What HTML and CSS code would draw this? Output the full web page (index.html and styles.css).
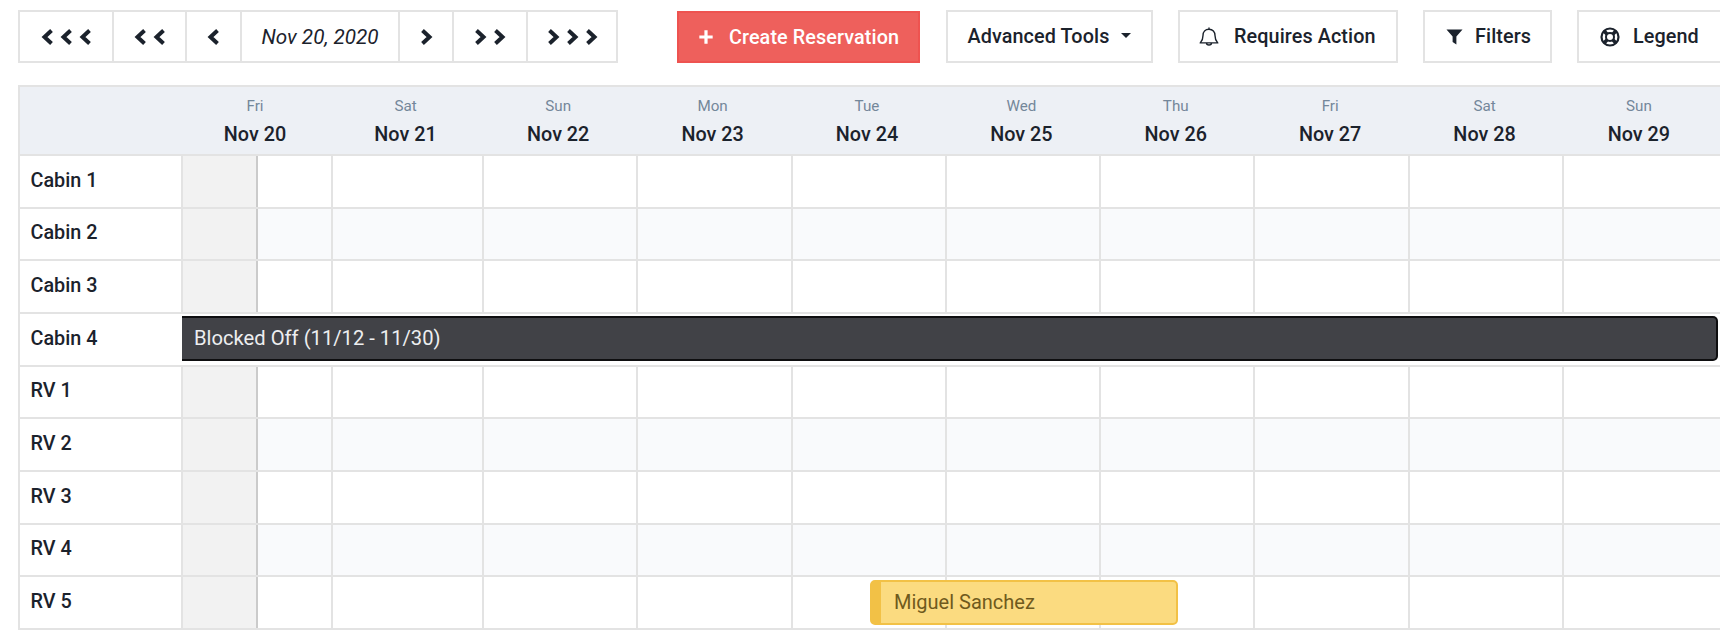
FILE: index.html
```html
<!DOCTYPE html>
<html lang="en">
<head>
<meta charset="utf-8">
<title>Reservations</title>
<link rel="stylesheet" href="styles.css">
</head>
<body>
<svg class="defs" width="0" height="0" aria-hidden="true">
  <symbol id="cl" viewBox="0 0 13 16"><polyline points="10.5,1.500 3.500,8 10.500,14.500" fill="none" stroke="currentColor" stroke-width="4"/></symbol>
  <symbol id="cr" viewBox="0 0 13 16"><polyline points="2.500,1.500 9.500,8 2.500,14.500" fill="none" stroke="currentColor" stroke-width="4"/></symbol>
</svg>
<div class="page">
  <div class="toolbar">
    <div class="pager">
      <div class="pg"><svg class="chev"><use href="#cl"/></svg><svg class="chev"><use href="#cl"/></svg><svg class="chev"><use href="#cl"/></svg></div>
      <div class="pg"><svg class="chev"><use href="#cl"/></svg><svg class="chev"><use href="#cl"/></svg></div>
      <div class="pg"><svg class="chev"><use href="#cl"/></svg></div>
      <div class="pg date">Nov 20, 2020</div>
      <div class="pg"><svg class="chev"><use href="#cr"/></svg></div>
      <div class="pg"><svg class="chev"><use href="#cr"/></svg><svg class="chev"><use href="#cr"/></svg></div>
      <div class="pg"><svg class="chev"><use href="#cr"/></svg><svg class="chev"><use href="#cr"/></svg><svg class="chev"><use href="#cr"/></svg></div>
    </div>
    <div class="btn create">
      <svg class="ico" viewBox="0 0 18 18"><path d="M9 1.500v15M1.500 9h15" stroke="currentColor" stroke-width="3.600" fill="none"/></svg>
      <span>Create Reservation</span>
    </div>
    <div class="btn tools"><span>Advanced Tools</span><i class="caret"></i></div>
    <div class="btn action">
      <svg class="ico" viewBox="0 0 20 22"><path d="M10 1.500v1.700M10 3.200c-3.700 0-6 2.700-6 6.200 0 4.600-1.300 5.800-2.800 7.500h17.600C17.300 15.200 16 14 16 9.400c0-3.500-2.300-6.200-6-6.200zM7.500 17c0 2.600 5 2.600 5 0" fill="none" stroke="currentColor" stroke-width="1.400" stroke-linejoin="round"/></svg>
      <span>Requires Action</span>
    </div>
    <div class="btn filters">
      <svg class="ico" viewBox="0 0 18 18"><path d="M.5 1.500h17L11 9v8.500L7 14.800V9z" fill="currentColor"/></svg>
      <span>Filters</span>
    </div>
    <div class="btn legend">
      <svg class="ico" viewBox="0 0 20 20"><circle cx="10" cy="10" r="8.500" fill="none" stroke="currentColor" stroke-width="2.200"/><circle cx="10" cy="10" r="4" fill="none" stroke="currentColor" stroke-width="2"/><path d="M3.800 3.800l3.400 3.400M16.200 3.800l-3.400 3.400M3.800 16.200l3.400-3.400M16.200 16.200l-3.400-3.400" stroke="currentColor" stroke-width="3.600"/></svg>
      <span>Legend</span>
    </div>
  </div>

  <div class="sheet">
    <div class="head">
      <div class="hd-corner"></div>
      <div class="hd"><span class="dow">Fri</span><span class="day">Nov 20</span></div>
      <div class="hd"><span class="dow">Sat</span><span class="day">Nov 21</span></div>
      <div class="hd"><span class="dow">Sun</span><span class="day">Nov 22</span></div>
      <div class="hd"><span class="dow">Mon</span><span class="day">Nov 23</span></div>
      <div class="hd"><span class="dow">Tue</span><span class="day">Nov 24</span></div>
      <div class="hd"><span class="dow">Wed</span><span class="day">Nov 25</span></div>
      <div class="hd"><span class="dow">Thu</span><span class="day">Nov 26</span></div>
      <div class="hd"><span class="dow">Fri</span><span class="day">Nov 27</span></div>
      <div class="hd"><span class="dow">Sat</span><span class="day">Nov 28</span></div>
      <div class="hd"><span class="dow">Sun</span><span class="day">Nov 29</span></div>
    </div>

    <div class="row">
      <div class="name">Cabin 1</div>
      <div class="cell past"></div><div class="cell half"></div>
      <div class="cell"></div><div class="cell"></div><div class="cell"></div><div class="cell"></div><div class="cell"></div><div class="cell"></div><div class="cell"></div><div class="cell"></div><div class="cell"></div>
    </div>
    <div class="row alt">
      <div class="name">Cabin 2</div>
      <div class="cell past"></div><div class="cell half"></div>
      <div class="cell"></div><div class="cell"></div><div class="cell"></div><div class="cell"></div><div class="cell"></div><div class="cell"></div><div class="cell"></div><div class="cell"></div><div class="cell"></div>
    </div>
    <div class="row">
      <div class="name">Cabin 3</div>
      <div class="cell past"></div><div class="cell half"></div>
      <div class="cell"></div><div class="cell"></div><div class="cell"></div><div class="cell"></div><div class="cell"></div><div class="cell"></div><div class="cell"></div><div class="cell"></div><div class="cell"></div>
    </div>
    <div class="row blocked">
      <div class="name">Cabin 4</div>
      <div class="bar-block">Blocked Off (11/12 - 11/30)</div>
    </div>
    <div class="row">
      <div class="name">RV 1</div>
      <div class="cell past"></div><div class="cell half"></div>
      <div class="cell"></div><div class="cell"></div><div class="cell"></div><div class="cell"></div><div class="cell"></div><div class="cell"></div><div class="cell"></div><div class="cell"></div><div class="cell"></div>
    </div>
    <div class="row alt">
      <div class="name">RV 2</div>
      <div class="cell past"></div><div class="cell half"></div>
      <div class="cell"></div><div class="cell"></div><div class="cell"></div><div class="cell"></div><div class="cell"></div><div class="cell"></div><div class="cell"></div><div class="cell"></div><div class="cell"></div>
    </div>
    <div class="row">
      <div class="name">RV 3</div>
      <div class="cell past"></div><div class="cell half"></div>
      <div class="cell"></div><div class="cell"></div><div class="cell"></div><div class="cell"></div><div class="cell"></div><div class="cell"></div><div class="cell"></div><div class="cell"></div><div class="cell"></div>
    </div>
    <div class="row alt">
      <div class="name">RV 4</div>
      <div class="cell past"></div><div class="cell half"></div>
      <div class="cell"></div><div class="cell"></div><div class="cell"></div><div class="cell"></div><div class="cell"></div><div class="cell"></div><div class="cell"></div><div class="cell"></div><div class="cell"></div>
    </div>
    <div class="row res-row">
      <div class="name">RV 5</div>
      <div class="cell past"></div><div class="cell half"></div>
      <div class="cell"></div><div class="cell"></div><div class="cell"></div><div class="cell"></div><div class="cell"></div><div class="cell"></div><div class="cell"></div><div class="cell"></div><div class="cell"></div>
      <div class="bar-res">Miguel Sanchez</div>
    </div>
  </div>
</div>
</body>
</html>
```
FILE: styles.css
```css
* { box-sizing: border-box; }
html, body { margin: 0; height: 100%; overflow: hidden; background: #fff; }
body { font-family: Roboto, "Liberation Sans", sans-serif; color: #1b222c; }
.defs { position: absolute; }
.page { width: 1702px; margin-left: 18px; padding-top: 10px; }

.toolbar { display: flex; height: 53px; gap: 25.500px; width: 1760px; }
.pager { display: flex; border: 2px solid #e3e3e3; margin-right: 33.500px; height: 53px; flex: none; width: 600px; }
.pg { display: flex; align-items: center; justify-content: center; gap: 6px; flex: none; border-left: 2px solid #e3e3e3; }
.pg:first-child { border-left: 0; width: 92px; }
.pg:nth-child(2) { width: 73px; }
.pg:nth-child(3) { width: 55px; }
.pg:nth-child(4) { width: 158px; }
.pg:nth-child(5) { width: 54px; }
.pg:nth-child(6) { width: 74px; }
.pg:nth-child(7) { width: 90px; }
.date { font-style: italic; font-size: 20.700px; }
.chev { width: 13px; height: 16px; color: #1b222c; }

.btn { display: flex; align-items: center; flex: none; border: 2px solid #e3e3e3; padding: 0 21px; font-size: 19.800px; font-weight: 500; letter-spacing: .1px; white-space: nowrap; }
.btn .ico { flex: none; }
.create { background: #ee605c; border-color: #ee5350; color: #fff; width: 243px; margin-top: 1px; gap: 15px; padding: 0 19px; }
.create .ico { width: 16px; height: 16px; }
.tools { width: 207px; gap: 12px; padding-left: 20px; }
.caret { width: 0; height: 0; border: 5.500px solid transparent; border-top-color: #1b222c; border-bottom: 0; margin-top: -2px; }
.action { width: 219.500px; gap: 15px; padding: 0 19px; }
.action .ico { width: 20px; height: 22px; }
.filters { width: 128.500px; gap: 12px; }
.filters .ico { width: 17px; height: 17px; }
.legend { gap: 13px; padding-right: 20px; width: 146px; }
.legend .ico { width: 20px; height: 20px; }

.sheet { margin-top: 21.500px; border-left: 2px solid #e3e3e3; border-top: 2px solid #e3e3e3; }
.head { display: grid; grid-template-columns: 161px 150px 151px repeat(8, 154.400px); height: 69.500px; background: #edf0f5; border-bottom: 2px solid #e3e3e3; overflow: hidden; }
.hd-corner { min-width: 0; }
.hd { display: flex; flex-direction: column; align-items: center; padding: 8px 2px 0 0; }
.dow { font-size: 15.200px; color: #74879a; line-height: 22px; }
.day { font-size: 19.800px; font-weight: 500; line-height: 27px; margin-top: 4.500px; }

.row { position: relative; display: grid; grid-template-columns: 161px 75px 75px 151px repeat(7, 154.250px) 1fr; grid-template-rows: 100%; height: 52.670px; border-bottom: 2px solid #e3e3e3; }
.name { display: flex; align-items: center; padding: 0 0 2.500px 10.500px; font-size: 19.800px; font-weight: 500; background: #fff; }
.cell { border-left: 2px solid #e3e3e3; }
.alt .cell { background: #f9fafc; }
.cell.past, .alt .cell.past { background: #f2f2f2; }
.cell.half { border-left: 2px solid #cbcbcb; }

.blocked { grid-template-columns: 161px 1537px; }
.bar-block { display: flex; align-items: center; margin: 2px 0 4px 1px; padding: 0 0 1px 12px; background: #414247; border: 2px solid #0e0e10; border-left-width: 0; border-radius: 0 5px 5px 0; color: #edeef0; font-size: 20.200px; }

.bar-res { position: absolute; left: 850px; top: 2.500px; width: 308px; height: 45px; display: flex; align-items: center; padding-left: 13px; background: #fbdb80; border: 2px solid #f2c146; border-left-width: 11px; border-radius: 5px; color: #6f5a1d; font-size: 20px; }
```
